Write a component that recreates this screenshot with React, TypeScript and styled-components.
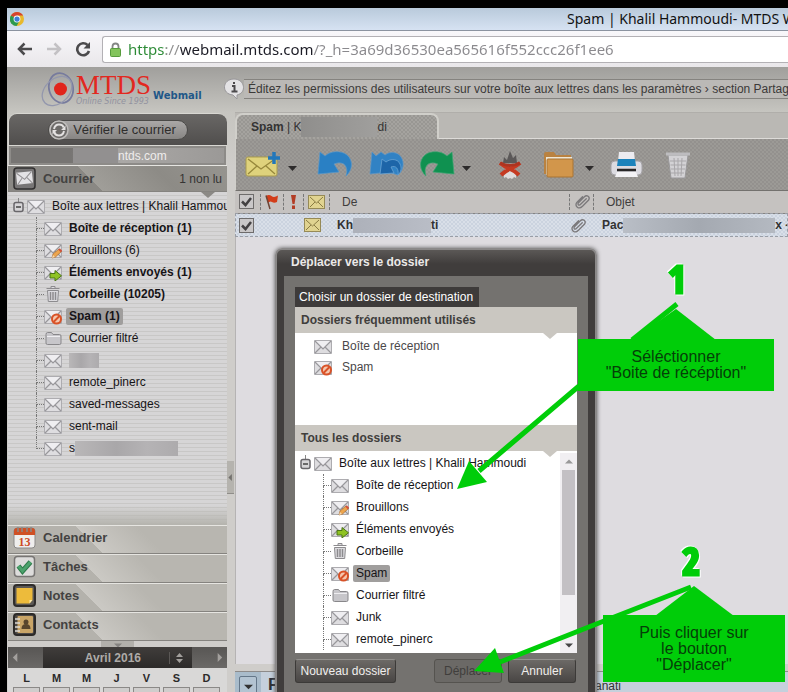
import React from "react";
import styled, { createGlobalStyle, css } from "styled-components";

const Global = createGlobalStyle`
  * { box-sizing: border-box; }
  body { margin: 0; background: #000; font-family: "Liberation Sans", Arial, sans-serif; font-size: 12px; color: #222; }
  button, input { font: inherit; color: inherit; }
  button { border: 0; padding: 0; background: none; cursor: pointer; }
  a { color: inherit; text-decoration: none; }
  ul { list-style: none; margin: 0; padding: 0; }
  svg { display: block; flex: none; }
`;

/* ---------- browser window ---------- */

const Screen = styled.div`
  position: relative;
  display: flex;
  flex-direction: column;
  height: 100vh;
  padding: 8px 0 0 7px;
  overflow: hidden;
`;

const TitleBar = styled.header`
  display: flex;
  align-items: center;
  justify-content: space-between;
  flex: none;
  height: 23px;
  padding-left: 3px;
  background: linear-gradient(#b9cadb, #d6e2f2);
  border-bottom: 1px solid #8b93a0;
  overflow: hidden;
`;

const WindowTitle = styled.div`
  width: 221px;
  font: 14px/20px "Noto Sans", "Open Sans", sans-serif;
  color: #111;
  white-space: nowrap;
  overflow: hidden;
`;

const NavBar = styled.nav`
  display: flex;
  align-items: center;
  flex: none;
  height: 36px;
  padding-left: 8px;
  background: linear-gradient(#f8f7fa, #e9e7ea);
`;

const NavButton = styled.button`
  display: grid;
  place-items: center;
  width: 20px;
  height: 24px;
  margin-right: 9px;
`;

const Address = styled.label`
  display: flex;
  align-items: center;
  gap: 7px;
  flex: 1;
  height: 27px;
  padding-left: 7px;
  background: #fff;
  border: 1px solid #b3b1b5;
  border-right: 0;
  border-radius: 3px 0 0 3px;
`;

const AddressInput = styled.input`
  flex: 1;
  min-width: 0;
  height: 24px;
  padding: 0;
  border: 0;
  outline: 0;
  font: 15px/24px "Noto Sans", "Open Sans", sans-serif;
  background: linear-gradient(90deg, #2b8a35 0 38px, #8d8d8d 38px 52px, #1c1c26 52px 185px, #8a898d 185px);
  -webkit-background-clip: text;
  background-clip: text;
  -webkit-text-fill-color: transparent;
`;

/* ---------- webmail shell ---------- */

const Webmail = styled.div`
  display: flex;
  flex-direction: column;
  flex: 1;
  min-height: 0;
  padding-left: 1px;
  background: linear-gradient(#a09f9c 0, #c6c5c0 45px, #cfcdca 100px);
`;

const Banner = styled.div`
  display: flex;
  flex: none;
  height: 45px;
`;

const Logo = styled.div`
  display: flex;
  align-items: center;
  width: 216px;
  padding-left: 33px;
`;

const LogoWords = styled.div`
  display: flex;
  flex-direction: column;
  padding-top: 2px;
`;

const LogoName = styled.span`
  height: 23px;
  font: 27px/23px "Liberation Serif", serif;
  color: #e2281f;
`;

const LogoTagline = styled.span`
  font: italic 8px/10px "DejaVu Sans", sans-serif;
  color: #92929f;
`;

const LogoProduct = styled.span`
  margin-left: 2px;
  padding-top: 12px;
  font: bold 10px/12px "DejaVu Sans", sans-serif;
  color: #1f5788;
`;

const Tip = styled.div`
  display: flex;
  align-items: center;
  flex: 1;
  min-width: 0;
  padding-bottom: 2px;
`;

const TipText = styled.div`
  flex: 1;
  height: 20px;
  padding-left: 4px;
  border: solid #85837f;
  border-width: 1px 0;
  background: #bbb9b6;
  font-size: 12px;
  line-height: 18px;
  color: #3c3a39;
  white-space: nowrap;
  overflow: hidden;
`;

const Columns = styled.div`
  display: flex;
  flex: 1;
  min-height: 0;
`;

const Sidebar = styled.aside`
  display: flex;
  flex-direction: column;
  width: 219px;
  flex: none;
  padding-top: 1px;
`;

const Gutter = styled.div`
  width: 8px;
  flex: none;
  display: flex;
  align-items: flex-start;
  padding-top: 349px;
`;

const Collapse = styled.button`
  display: grid;
  place-items: center;
  width: 7px;
  height: 33px;
  background: #b5b3ae;
  border-bottom: 1px solid #8f8d89;
`;

/* ---------- sidebar ---------- */

const CheckBar = styled.div`
  display: flex;
  justify-content: center;
  align-items: center;
  flex: none;
  height: 33px;
  background: linear-gradient(#696765, #504e4d);
  border: 1px solid #d8d7d2;
  border-width: 1px 0 1px 1px;
  border-radius: 9px 9px 0 0;
`;

const CheckMail = styled.button`
  display: flex;
  align-items: center;
  gap: 4px;
  height: 20px;
  padding-right: 11px;
  border: 1px solid #4b4a48;
  border-radius: 10px;
  background: linear-gradient(#aaa8a7, #878583);
  font-size: 13px;
  color: #2e2d2c;
`;

const Account = styled.div`
  display: flex;
  align-items: center;
  flex: none;
  height: 19px;
  margin: 0 1px;
  border: 2px solid #8d8b88;
  background: linear-gradient(90deg, #777573 0, #777573 60px, #aaa8a6 110px, #9b9997);
  color: #efedec;
  font-size: 12px;
  padding-left: 62px;
`;

const Blur = styled.span<{ $w: number; $tone?: string; $h?: number }>`
  display: inline-block;
  flex: none;
  width: ${(p) => p.$w}px;
  height: ${(p) => p.$h ?? 15}px;
  vertical-align: middle;
  background: ${(p) => p.$tone ?? "linear-gradient(90deg, #b9b7b8, #a9a7a9 40%, #b5b3b5 70%, #adabad)"};
`;

const SectionHead = styled.button<{ $active?: boolean }>`
  display: flex;
  align-items: center;
  flex: none;
  gap: 7px;
  height: ${(p) => (p.$active ? 27 : 29)}px;
  padding: ${(p) => (p.$active ? "0 5px" : "0 5px 4px")};
  border-top: 1px solid #e6e5e1;
  border-bottom: 1px solid #85837f;
  text-align: left;
  font-size: 13px;
  font-weight: bold;
  color: #434241;
  background: ${(p) =>
    p.$active
      ? "linear-gradient(45deg, #8a8884 0 67px, #a09e99 67px, #8d8b86 120px, #96948f)"
      : "linear-gradient(45deg, #b4b2ac 0 67px, #cbc9c4 67px, #b8b6b0 110px)"};
`;

const SectionName = styled.span`
  flex: 1;
`;

const Unread = styled.span`
  font-size: 12px;
  font-weight: normal;
  color: #353433;
`;

const FolderPane = styled.div`
  flex: 1;
  min-height: 0;
  overflow: hidden;
  padding: 3px 0 0 5px;
  background: linear-gradient(transparent calc(100% - 20px), #b5b4ae), repeating-linear-gradient(#d6d5d6 0 3px, #c8c7c6 3px 4px);
`;

const Notch = styled.svg.attrs({ viewBox: "0 0 14 6", width: 14, height: 6 })<{ $right: number; $tone: string }>`
  position: absolute;
  top: 0;
  right: ${(p) => p.$right}px;
  fill: ${(p) => p.$tone};
`;

const NotchHost = styled.div`
  position: relative;
  height: 0;
`;

const Splitter = styled.div`
  display: flex;
  justify-content: center;
  flex: none;
  height: 6px;
`;

const SplitterGrip = styled.div`
  display: grid;
  place-items: center;
  width: 33px;
  background: #b2b0ab;
`;

/* ---------- folder tree ---------- */

const Branch = styled.ul`
  margin-left: 23px;
`;

const Node = styled.li`
  display: flex;
  align-items: center;
  height: 22px;
`;

const Toggle = styled.button`
  display: grid;
  flex: none;
  width: 14px;
`;

const Elbow = styled.span<{ $last?: boolean }>`
  display: flex;
  flex-direction: column;
  width: 8px;
  height: 22px;
  &::before {
    content: "";
    height: 11px;
    border-left: 1px dotted #777;
    border-bottom: 1px dotted #777;
  }
  &::after {
    content: "";
    height: 11px;
    border-left: ${(p) => (p.$last ? "0" : "1px dotted #777")};
  }
`;

const FolderLink = styled.a<{ $bold?: boolean; $selected?: boolean }>`
  display: flex;
  align-items: center;
  height: 17px;
  margin-left: 4px;
  padding: 0 3px;
  border-radius: 2px;
  color: #161417;
  font-weight: ${(p) => (p.$bold ? "bold" : "normal")};
  white-space: nowrap;
  background: ${(p) => (p.$selected ? "#a09e9d" : "transparent")};
`;

/* ---------- calendar ---------- */

const Calendar = styled.section`
  flex: none;
  height: 45px;
  overflow: hidden;
  background: #d9d8d7;
`;

const MonthBar = styled.div`
  display: flex;
  height: 21px;
  background: #55534f;
`;

const MonthStep = styled.button`
  display: grid;
  place-items: center;
  width: 35px;
  background: linear-gradient(#585654, #6b6967);
  &:first-child { justify-content: start; padding-left: 3px; }
  &:last-child { justify-content: end; padding-right: 3px; }
`;

const MonthName = styled.button`
  display: flex;
  align-items: center;
  justify-content: flex-end;
  gap: 28px;
  flex: 1;
  padding-right: 9px;
  background: linear-gradient(#403d3b, #2c2a29);
  color: #aeaba8;
  font-size: 12px;
  font-weight: bold;
`;

const Month = styled.table`
  width: calc(100% - 6px);
  margin-left: 2px;
  table-layout: fixed;
  border-collapse: separate;
  border-spacing: 3px 1px;
  font-size: 12px;
  text-align: center;
  th { height: 17px; padding: 0; color: #2b2a2a; font-size: 11px; }
  td { height: 20px; padding: 0; border: 1px solid #8b8987; color: #777; background: #cfcdcc; }
`;

/* ---------- mail list ---------- */

const Main = styled.main`
  display: flex;
  flex-direction: column;
  flex: 1;
  min-width: 0;
`;

const dots = css`
  background-image: radial-gradient(circle at 1px 1px, #86848266 1px, transparent 1px), radial-gradient(circle at 3px 3px, #86848266 1px, transparent 1px);
  background-size: 4px 4px;
`;

const TabRow = styled.div`
  display: flex;
  flex: none;
  height: 27px;
  background: #bab8b4;
  border-top: 1px solid #b0aeaa;
`;

const Tab = styled.button`
  display: flex;
  align-items: center;
  width: 204px;
  padding-left: 14px;
  border: 2px solid #d0cfca;
  border-bottom: 0;
  border-radius: 8px 8px 0 0;
  background-color: #a5a39f;
  ${dots}
  font-size: 12px;
  color: #333;
  white-space: nowrap;
`;

const TabRest = styled.div`
  flex: 1;
  border-bottom: 1px solid #dddbd8;
`;

const Toolbar = styled.div`
  display: flex;
  align-items: center;
  flex: none;
  height: 52px;
  padding-left: 9px;
  border-left: 1px solid #d0cfca;
  border-bottom: 1px solid #73716e;
  background-color: #9c9a96;
  ${dots}
`;

const Tool = styled.button<{ $space?: number }>`
  display: grid;
  place-items: center;
  margin-right: ${(p) => p.$space ?? 0}px;
`;

const MailTable = styled.table`
  width: 100%;
  flex: none;
  table-layout: fixed;
  border-collapse: collapse;
  white-space: nowrap;
  th, td { padding: 0; overflow: hidden; text-align: left; }
  thead tr { height: 22px; background: #c5c2c0; }
  th { font-weight: normal; color: #3f3d3c; }
  tbody tr { height: 24px; background: repeating-conic-gradient(#cbd3df 0 25%, #d9dfe8 0 50%) 0 0 / 4px 4px; outline: 1px dashed #9a9ea6; outline-offset: -1px; }
  thead { border-bottom: 1px solid #858381; }
`;

const HeadCell = styled.div<{ $rule?: boolean; $pad?: number }>`
  display: flex;
  align-items: center;
  height: 16px;
  padding-left: ${(p) => p.$pad ?? 4}px;
  border-right: ${(p) => (p.$rule ? "1px dashed #777" : "0")};
`;

const BodyCell = styled.div<{ $pad?: number }>`
  display: flex;
  align-items: center;
  padding-left: ${(p) => p.$pad ?? 4}px;
  color: #333;
  font-weight: bold;
`;

const Tick = styled.label`
  display: grid;
  width: 15px;
  height: 15px;
  > * { grid-area: 1 / 1; }
`;

const TickInput = styled.input`
  appearance: none;
  margin: 0;
  width: 15px;
  height: 15px;
  border: 1px solid #6e6c6c;
  background: #c9c7c8;
`;

const MailBody = styled.div`
  flex: 1;
  background: #dedce0;
  border-left: 1px solid #b5b3b3;
`;

const Preview = styled.div`
  display: flex;
  flex: none;
  height: 21px;
  margin-top: 7px;
  padding: 4px 0 0 4px;
  border-top: 1px solid #8d8b8a;
  background: linear-gradient(90deg, #a9bccb 0 26px, #c5d0dc 26px);
  overflow: hidden;
`;

const PreviewMenu = styled.button`
  display: grid;
  place-items: center;
  width: 18px;
  height: 20px;
  border: 1px solid #647789;
  border-radius: 2px;
  background: #b3c4d2;
`;

const PreviewTitle = styled.span`
  width: 330px;
  padding-left: 11px;
  font-size: 17px;
  line-height: 18px;
  font-weight: bold;
  color: #2d3038;
`;

const PreviewSender = styled.span`
  padding-top: 3px;
  color: #333;
`;

/* ---------- dialog ---------- */

const Dialog = styled.section`
  position: absolute;
  left: 275px;
  top: 248px;
  width: 322px;
  padding: 0 7px 12px;
  border: 2px solid #8b8989;
  border-radius: 7px 7px 0 0;
  background: linear-gradient(#5b5856, #403d3c 14px);
  box-shadow: 0 0 4px #555;
`;

const DialogTitle = styled.h2`
  margin: 0;
  padding-left: 7px;
  font-size: 12px;
  line-height: 24px;
  height: 26px;
  color: #ece9e8;
`;

const DialogBody = styled.div`
  padding: 11px;
  background: #74726f;
`;

const DialogTab = styled.h3`
  width: fit-content;
  margin: 0;
  padding: 0 6px 0 4px;
  font-size: 12px;
  font-weight: normal;
  line-height: 20px;
  color: #fff;
  background: #3e3b3a;
`;

const GroupTitle = styled.h4`
  margin: 0;
  padding-left: 6px;
  font-size: 12px;
  line-height: 26px;
  color: #403e3c;
  background: #cac7c1;
`;

const Frequent = styled.div`
  height: 92px;
  padding: 2px 0 0 19px;
  background: #fff;
  li { height: 21px; }
  a { margin-left: 7px; color: #4b484a; }
`;

const AllFolders = styled.div`
  display: flex;
  height: 202px;
  padding-left: 5px;
  background: #fff;
  overflow: hidden;
`;

const AllTree = styled.div`
  flex: 1;
  padding-top: 1px;
`;

const ScrollTrack = styled.div`
  display: flex;
  flex-direction: column;
  align-items: center;
  width: 17px;
  margin-top: 2px;
  background: #f1eff2;
`;

const ScrollStep = styled.button`
  display: grid;
  place-items: center;
  width: 17px;
  height: 17px;
`;

const ScrollRest = styled.div`
  flex: 1;
`;

const ScrollThumb = styled.div`
  width: 13px;
  height: 125px;
  background: #c3c0c4;
`;

const Actions = styled.div`
  display: flex;
  gap: 6px;
  padding: 6px 1px 0 0;
`;

const ActionButton = styled.button<{ $width: number }>`
  width: ${(p) => p.$width}px;
  height: 24px;
  border: 1px solid #3c3a38;
  border-top-color: #93918e;
  border-radius: 3px;
  background: linear-gradient(#6c6966, #494644);
  font-size: 12px;
  color: #f0eeed;
  white-space: nowrap;
  &:first-child { margin-right: auto; }
  &:disabled { color: #403e3c; background: #6b6966; border-color: #55534f; }
`;

/* ---------- tutorial call-outs ---------- */

const Arrows = styled.svg`
  position: absolute;
  left: 0;
  top: 0;
  pointer-events: none;
`;

const Callout = styled.div<{ $x: number; $y: number; $w: number; $h: number }>`
  position: absolute;
  display: grid;
  place-items: center;
  left: ${(p) => p.$x}px;
  top: ${(p) => p.$y}px;
  width: ${(p) => p.$w}px;
  height: ${(p) => p.$h}px;
  background: #00cd09;
  font-size: 16px;
  line-height: 16px;
  text-align: center;
  color: #053f08;
`;

const StepNumber = styled.div<{ $x: number; $y: number }>`
  position: absolute;
  left: ${(p) => p.$x}px;
  top: ${(p) => p.$y}px;
  width: 30px;
  text-align: center;
  font: bold 38px/40px "Liberation Sans Narrow", "Open Sans Condensed", "DejaVu Sans Condensed", sans-serif;
  color: #00cd09;
  -webkit-text-stroke: 3px #00cd09;
  filter: drop-shadow(1px 1px 0 #fff) drop-shadow(-1px -1px 0 #fff);
`;

/* ---------- icons ---------- */

type Kind = "mail" | "draft" | "sent" | "trash" | "spam" | "folder";

function FolderIcon({ kind }: { kind: Kind }) {
  if (kind === "trash")
    return (
      <svg width="18" height="18" viewBox="0 0 18 18" fill="none" stroke="#8c8b8e" strokeWidth="1">
        <path d="M2.5 3.500h13M7 3V1.500h4V3M3.500 5.500l.8 11h9.400l.8-11z" fill="#dddce0" />
        <path d="M6.500 7v8M9 7v8M11.500 7v8" strokeWidth="1.500" />
      </svg>
    );
  if (kind === "folder")
    return (
      <svg width="18" height="18" viewBox="0 0 18 18">
        <path d="M2 5.500q0-2 1.500-2h4l1.500 2h6.500q1.500 0 1.500 1.500v7q0 1.500-1.500 1.500h-12Q2 15.500 2 14z" fill="#c7c6ca" stroke="#88878a" />
        <path d="M3 7.500h13" stroke="#eeedf0" />
      </svg>
    );
  return (
    <svg width="18" height="18" viewBox="0 0 18 18">
      <path d="M.5 3.500h17v13H.5z" fill="#dedde0" stroke="#adacb0" />
      <path d="M1 4l8 8 8-8z" fill="#efeef1" />
      <path d="M1 4l8 8 8-8M1 16l6-6M17 16l-6-6" fill="none" stroke="#98979b" strokeWidth="1.200" />
      {kind === "draft" && (
        <>
          <path d="M8 17l1-4 6-5 2.500 2.500-6 5.500z" fill="#eda54d" stroke="#a56831" strokeWidth=".7" />
          <path d="M15 8l2.500 2.500" stroke="#d0513c" strokeWidth="2" />
          <path d="M8 17l1-3 2 2z" fill="#f5dab1" />
        </>
      )}
      {kind === "sent" && <path d="M6 10.500h5v-3l6.500 5.300L11 18v-3H6z" fill="#8fc323" stroke="#4b7517" />}
      {kind === "spam" && (
        <>
          <circle cx="12.500" cy="12" r="4.500" fill="#f5c7af" stroke="#d95227" strokeWidth="2" />
          <path d="M9.500 15l6-6" stroke="#d95227" strokeWidth="2" />
        </>
      )}
    </svg>
  );
}

const Minus = () => (
  <svg width="11" height="16" viewBox="0 0 11 16">
    <path d="M5.500 0v4" stroke="#888" />
    <rect x="1" y="4.500" width="9" height="9" rx="2" fill="#d7d6d8" stroke="#68666a" strokeWidth="1.500" />
    <path d="M3 9h5" stroke="#444" strokeWidth="1.500" />
  </svg>
);

const Triangle = ({ dir, color = "#333", size = 9 }: { dir: "up" | "down" | "left" | "right"; color?: string; size?: number }) => {
  const d = { up: "M0 7l5-5 5 5z", down: "M0 3h10l-5 5z", left: "M7 0v10L2 5z", right: "M3 0l5 5-5 5z" }[dir];
  return (
    <svg width={size} height={size} viewBox="0 0 10 10">
      <path d={d} fill={color} />
    </svg>
  );
};

const YellowMail = () => (
  <svg width="17" height="14" viewBox="0 0 17 14">
    <rect x=".5" y=".5" width="16" height="13" fill="#e0d390" stroke="#968a57" />
    <path d="M2 2l6.500 6L15 2M2 12l5-5M15 12l-5-5" fill="none" stroke="#8a7c44" />
  </svg>
);

const Flag = () => (
  <svg width="14" height="16" viewBox="0 0 14 16">
    <path d="M1 2q3-2 5.500 0t6.500-.5L12 8q-3 1.500-5 0T3 9z" fill="#d33d19" />
    <path d="M1 1.500L5 15" stroke="#6d4435" strokeWidth="1.500" />
  </svg>
);

const Clip = () => (
  <svg width="17" height="17" viewBox="0 0 18 18" fill="none" stroke="#7b797b" strokeWidth="1.400" strokeLinecap="round">
    <path d="M13 6L7 12q-1.500 1.500-2.500.5T5 10l6-6q2-2 4-.5t.5 4L9 14q-3 3-5.500 1T3 10l6-6" />
  </svg>
);

const CheckMark = () => (
  <svg width="15" height="15" viewBox="0 0 15 15">
    <path d="M3 7.500l3.500 3.500L12 4" fill="none" stroke="#434143" strokeWidth="2.500" />
  </svg>
);

const arrowPath = "M3 1L8 5C13 0 24-1 30 4C37 10 35 20 29 25C32 16 27 9 17 13L22 21L1 23Z";

const Undo = () => (
  <svg width="36" height="28" viewBox="0 0 36 28">
    <path d={arrowPath} fill="#2a80c4" stroke="#5598cd" strokeWidth=".7" />
  </svg>
);

const UndoAll = () => (
  <svg width="36" height="28" viewBox="0 0 36 28">
    <path d="M3 1L7 5L12 1L16 4C21 0 29 1 32 6C36 12 34 20 29 24L20 21L1 23Z" fill="#3182c4" stroke="#5b97c9" strokeWidth=".7" />
    <path d="M13 8L17 11C22 7 29 8 31 13C33 17 32 21 29 24C30 18 27 14 22 16L25 22L11 23Z" fill="#1d65a8" stroke="#6aa3d3" strokeWidth=".8" />
  </svg>
);

const Redo = () => (
  <svg width="36" height="28" viewBox="0 0 36 28">
    <g transform="translate(36 0) scale(-1 1)">
      <path d={arrowPath} fill="#0f9150" stroke="#3ba671" strokeWidth=".7" />
    </g>
  </svg>
);

const NewMail = () => (
  <svg width="36" height="28" viewBox="0 0 36 28">
    <rect x="1" y="6" width="31" height="19" rx="2" fill="#dfd27c" stroke="#a99b4f" />
    <path d="M3 8l13 10L30 8M3 23l9-8M30 23l-9-8" fill="none" stroke="#97883c" strokeWidth="1.300" />
    <path d="M29 1v12M23 7h12" stroke="#2277bb" strokeWidth="3.500" />
  </svg>
);

const Burn = () => (
  <svg width="30" height="32" viewBox="0 0 30 32">
    <path d="M8 14l1-6 3 3 3-9 3 7 3-3 1 8z" fill="#5b5858" />
    <path d="M15 15q7 5 6 14l-2-1-2 2-2-1-2 1-2-2-2 1q-1-9 6-14z" fill="#dedbdb" />
    <path d="M5 14q5 4 10 6t9 6M25 14q-5 4-10 6t-9 6" fill="none" stroke="#c53a22" strokeWidth="4" />
    <path d="M5 14q10 5 20 0" fill="none" stroke="#ad3421" strokeWidth="3" />
  </svg>
);

const BigFolder = () => (
  <svg width="32" height="28" viewBox="0 0 32 28">
    <path d="M1 3q0-2 2-2h8l2 3h15v19H1z" fill="#b98241" />
    <path d="M3 6h26v18H3z" fill="#efe7d6" />
    <rect x="4" y="8" width="26" height="18" rx="1" fill="#d2964b" stroke="#a97535" />
  </svg>
);

const Printer = () => (
  <svg width="34" height="28" viewBox="0 0 34 28">
    <path d="M10 1h15l1 9H9z" fill="#ecebf0" />
    <rect x="2" y="10" width="31" height="14" rx="4" fill="#dcdbe1" stroke="#a5a3a7" />
    <path d="M9 8h17l1 7H8z" fill="#1b82bb" />
    <path d="M8 19h19" stroke="#282627" strokeWidth="2.500" />
    <path d="M8 21h19l2 5H6z" fill="#f3f2f5" />
  </svg>
);

const BigTrash = () => (
  <svg width="26" height="28" viewBox="0 0 26 28">
    <path d="M3 4h20l-3 23H6z" fill="#d3d2d5" stroke="#9a999b" />
    <path d="M1 3h24" stroke="#bdbcbf" strokeWidth="3" />
    <path d="M5 10h16M5.500 14h15M6 18h14M6 22h13M9 7l1 18M13 7v18M17 7l-1 18" stroke="#a9a7aa" />
  </svg>
);

const SectionIcon = ({ kind }: { kind: "mail" | "calendar" | "tasks" | "notes" | "contacts" }) => (
  <svg width="23" height="23" viewBox="0 0 23 23">
    {kind === "mail" && (
      <>
        <rect x="1" y="1" width="21" height="21" rx="3" fill="#777575" stroke="#312f2f" strokeWidth="1.500" />
        <g transform="rotate(-6 11 11)">
          <rect x="3.500" y="5" width="16" height="12" fill="#e4e3e5" />
          <path d="M4 5.500l7.500 7L19 5.500M4 17l5-6M19 17l-5-6" fill="none" stroke="#929092" />
        </g>
      </>
    )}
    {kind === "calendar" && (
      <>
        <rect x="1" y="2" width="21" height="20" rx="3" fill="#efeeed" stroke="#8c8a88" />
        <path d="M1 9V5q0-3 3-3h15q3 0 3 3v4z" fill="#cf5025" />
        <path d="M5 1v5M9 1v5M14 1v5M18 1v5" stroke="#8d8987" strokeWidth="1.500" />
        <text x="11.500" y="19.500" textAnchor="middle" fontFamily="Liberation Serif" fontWeight="bold" fontSize="12" fill="#cd4c24">
          13
        </text>
      </>
    )}
    {kind === "tasks" && (
      <>
        <rect x="1.500" y="1.500" width="20" height="20" rx="3" fill="#dddcdb" stroke="#777573" strokeWidth="1.500" />
        <path d="M5.500 11l4 5 8-9" fill="none" stroke="#2e7b4a" strokeWidth="5" />
        <path d="M5.500 11l4 5 8-9" fill="none" stroke="#4ba26c" strokeWidth="3" />
      </>
    )}
    {kind === "notes" && (
      <>
        <rect x="1" y="1" width="21" height="21" rx="3" fill="#5c5955" stroke="#2f2d2b" strokeWidth="2" />
        <path d="M3.500 4h16v12l-3 3.500h-13z" fill="#edbb3b" />
        <path d="M19.500 16h-3v3.500z" fill="#faeab0" />
      </>
    )}
    {kind === "contacts" && (
      <>
        <rect x="1" y="1" width="21" height="21" rx="3" fill="#4f4b47" stroke="#2c2a28" strokeWidth="2" />
        <rect x="4.500" y="3" width="15.500" height="17" rx="1" fill="#c9a567" />
        <circle cx="13" cy="9" r="2.500" fill="#58452c" />
        <path d="M8.500 16q0-5 4.500-5t4.500 5z" fill="#58452c" />
        <path d="M2 6h5M2 10h5M2 14h5M2 18h5" stroke="#dedbd6" strokeWidth="1.500" />
      </>
    )}
  </svg>
);

const Chrome = () => (
  <svg width="14" height="14" viewBox="0 0 16 16">
    <circle cx="8" cy="8" r="8" fill="#e8b92c" />
    <path d="M8 8L1 4Q3.500 0 8 0t7 4H8z" fill="#d5432f" />
    <path d="M8 8l-7-4q-2.500 5 .5 9Q4 16 7.500 16L11 10z" fill="#2c9950" />
    <circle cx="8" cy="8" r="3.900" fill="#fff" />
    <circle cx="8" cy="8" r="3" fill="#3d7fd6" />
  </svg>
);

const BackArrow = ({ color, flip }: { color: string; flip?: boolean }) => (
  <svg width="16" height="14" viewBox="0 0 16 14">
    <path d={flip ? "M1 7h12M8.500 1.500L14 7l-5.500 5.500" : "M15 7H3M7.500 1.500L2 7l5.500 5.500"} fill="none" stroke={color} strokeWidth="2.500" />
  </svg>
);

const Reload = () => (
  <svg width="16" height="16" viewBox="0 0 16 16">
    <path d="M12.500 4A6 6 0 1 0 14 10" fill="none" stroke="#4b4a4c" strokeWidth="2.600" />
    <path d="M15 1v6.500H8.500z" fill="#4b4a4c" />
  </svg>
);

const Lock = () => (
  <svg width="11" height="15" viewBox="0 0 11 15">
    <path d="M2.500 7V4.500q0-3 3-3t3 3V7" fill="none" stroke="#838684" strokeWidth="1.800" />
    <rect x=".5" y="6.500" width="10" height="8" rx="1" fill="#83c45c" stroke="#579b3d" />
  </svg>
);

const Sync = () => (
  <svg width="20" height="20" viewBox="0 0 20 20">
    <circle cx="10" cy="10" r="9" fill="#6d6b69" stroke="#bfbdbb" strokeWidth="1.500" />
    <path d="M5 9q1-4.500 5-4.500t4.500 3M15 11q-1 4.500-5 4.500T5.500 12" fill="none" stroke="#e4e2e1" strokeWidth="2" />
    <path d="M16.500 5.500V10H12zM3.500 14.500V10H8z" fill="#e4e2e1" />
  </svg>
);

const InfoBubble = () => (
  <svg width="20" height="22" viewBox="0 0 20 22">
    <path d="M10 1C21 1 23 15 13 17v4l-4-4C-3 16-2 1 10 1z" fill="#e3e2e4" stroke="#99979a" />
    <path d="M8 8h2.500v5M7.500 13.500h6M10 4v2" fill="none" stroke="#4c4a4c" strokeWidth="2" />
  </svg>
);

const LogoMark = () => (
  <svg width="35" height="36" viewBox="0 0 35 36" fill="none">
    <ellipse cx="20" cy="16" rx="12" ry="15" stroke="#777b9d" strokeWidth="1.800" transform="rotate(-14 20 16)" />
    <ellipse cx="16" cy="19" rx="17" ry="12" stroke="#9397ad" strokeWidth="1.300" transform="rotate(-44 16 19)" />
    <circle cx="19.500" cy="17" r="6.500" fill="#e1251c" />
  </svg>
);

function Caret({ wide }: { wide?: boolean }) {
  return (
    <svg width={wide ? 28 : 22} height="20" viewBox={wide ? "-3 0 28 20" : "0 0 22 20"}>
      <path d="M7 11h9l-4.500 5z" fill="#2d2b2b" />
    </svg>
  );
}

/* ---------- composition ---------- */

type Folder = { name: string; kind: Kind; bold?: boolean; selected?: boolean; hidden?: number };

const mailbox: Folder[] = [
  { name: "Boîte de réception (1)", kind: "mail", bold: true },
  { name: "Brouillons (6)", kind: "draft" },
  { name: "Éléments envoyés (1)", kind: "sent", bold: true },
  { name: "Corbeille (10205)", kind: "trash", bold: true },
  { name: "Spam (1)", kind: "spam", bold: true, selected: true },
  { name: "Courrier filtré", kind: "folder" },
  { name: "", kind: "mail", hidden: 30 },
  { name: "remote_pinerc", kind: "mail" },
  { name: "saved-messages", kind: "mail" },
  { name: "sent-mail", kind: "mail" },
  { name: "s", kind: "mail", hidden: 103 },
];

const destinations: Folder[] = [
  { name: "Boîte de réception", kind: "mail" },
  { name: "Brouillons", kind: "draft" },
  { name: "Éléments envoyés", kind: "sent" },
  { name: "Corbeille", kind: "trash" },
  { name: "Spam", kind: "spam", selected: true },
  { name: "Courrier filtré", kind: "folder" },
  { name: "Junk", kind: "mail" },
  { name: "remote_pinerc", kind: "mail" },
];

function FolderTree({ folders, more }: { folders: Folder[]; more?: boolean }) {
  return (
    <ul>
      <Node>
        <Toggle aria-label="Réduire">
          <Minus />
        </Toggle>
        <FolderIcon kind="mail" />
        <FolderLink href="#root">Boîte aux lettres | Khalil Hammoudi</FolderLink>
      </Node>
      <li>
        <Branch>
          {folders.map((f, i) => (
            <Node key={i}>
              <Elbow $last={!more && i === folders.length - 1} />
              <FolderIcon kind={f.kind} />
              <FolderLink href="#folder" $bold={f.bold} $selected={f.selected}>
                {f.name}
                {f.hidden && <Blur $w={f.hidden} />}
              </FolderLink>
            </Node>
          ))}
        </Branch>
      </li>
    </ul>
  );
}

const Check = ({ label }: { label: string }) => (
  <Tick>
    <TickInput type="checkbox" defaultChecked aria-label={label} />
    <CheckMark />
  </Tick>
);

export default function App() {
  return (
    <Screen>
      <Global />
      <TitleBar>
        <Chrome />
        <WindowTitle>Spam | Khalil Hammoudi- MTDS Webmail</WindowTitle>
      </TitleBar>
      <NavBar>
        <NavButton aria-label="Précédent"><BackArrow color="#4b4a4c" /></NavButton>
        <NavButton aria-label="Suivant"><BackArrow color="#c3c1c4" flip /></NavButton>
        <NavButton aria-label="Actualiser"><Reload /></NavButton>
        <Address>
          <Lock />
          <AddressInput aria-label="Adresse" defaultValue="https://webmail.mtds.com/?_h=3a69d36530ea565616f552ccc26f1ee6" />
        </Address>
      </NavBar>

      <Webmail>
        <Banner>
          <Logo>
            <LogoMark />
            <LogoWords>
              <LogoName>MTDS</LogoName>
              <LogoTagline>Online Since 1993</LogoTagline>
            </LogoWords>
            <LogoProduct>Webmail</LogoProduct>
          </Logo>
          <Tip>
            <InfoBubble />
            <TipText>
              Éditez les permissions des utilisateurs sur votre boîte aux lettres dans les paramètres › section Partage
            </TipText>
          </Tip>
        </Banner>

        <Columns>
          <Sidebar>
            <CheckBar>
              <CheckMail><Sync />Vérifier le courrier</CheckMail>
            </CheckBar>
            <Account>
              <Blur $w={45} $tone="#929090" />
              ntds.com
            </Account>
            <SectionHead $active>
              <SectionIcon kind="mail" />
              <SectionName>Courrier</SectionName>
              <Unread>1 non lu</Unread>
            </SectionHead>
            <NotchHost><Notch $right={12} $tone="#8b8985"><path d="M0 0h14L7 6z" /></Notch></NotchHost>
            <FolderPane><FolderTree folders={mailbox} /></FolderPane>
            <SectionHead><SectionIcon kind="calendar" /><SectionName>Calendrier</SectionName></SectionHead>
            <SectionHead><SectionIcon kind="tasks" /><SectionName>Tâches</SectionName></SectionHead>
            <SectionHead><SectionIcon kind="notes" /><SectionName>Notes</SectionName></SectionHead>
            <SectionHead><SectionIcon kind="contacts" /><SectionName>Contacts</SectionName></SectionHead>
            <Splitter><SplitterGrip><Triangle dir="down" color="#858380" size={8} /></SplitterGrip></Splitter>
            <Calendar>
              <MonthBar>
                <MonthStep aria-label="Mois précédent"><Triangle dir="left" color="#a3a09d" /></MonthStep>
                <MonthName>
                  Avril 2016
                  <svg width="14" height="12" viewBox="0 0 14 12">
                    <path d="M.5 0v12" stroke="#5b5856" />
                    <path d="M7 5l3.500-4L14 5zM7 7l3.500 4L14 7z" fill="#a3a09d" />
                  </svg>
                </MonthName>
                <MonthStep aria-label="Mois suivant"><Triangle dir="right" color="#a3a09d" /></MonthStep>
              </MonthBar>
              <Month>
                <thead>
                  <tr>{["L", "M", "M", "J", "V", "S", "D"].map((d, i) => <th key={i}>{d}</th>)}</tr>
                </thead>
                <tbody>
                  <tr>{[28, 29, 30, 31, 1, 2, 3].map((d) => <td key={d}>{d}</td>)}</tr>
                </tbody>
              </Month>
            </Calendar>
          </Sidebar>
          <Gutter>
            <Collapse aria-label="Replier le panneau"><Triangle dir="left" color="#73716e" size={7} /></Collapse>
          </Gutter>

          <Main>
            <TabRow>
              <Tab>
                <b>Spam</b>&nbsp;|&nbsp;K<Blur $w={76} $h={20} $tone="linear-gradient(90deg, #8f8e8c, #a09f9d)" />di
              </Tab>
              <TabRest />
            </TabRow>
            <Toolbar>
              <Tool aria-label="Nouveau message"><NewMail /></Tool>
              <Tool aria-label="Options de message" $space={14}><Caret /></Tool>
              <Tool aria-label="Répondre" $space={16}><Undo /></Tool>
              <Tool aria-label="Répondre à tous" $space={14}><UndoAll /></Tool>
              <Tool aria-label="Transférer"><Redo /></Tool>
              <Tool aria-label="Options de transfert" $space={18}><Caret /></Tool>
              <Tool aria-label="Indésirable" $space={18}><Burn /></Tool>
              <Tool aria-label="Déplacer"><BigFolder /></Tool>
              <Tool aria-label="Options de déplacement" $space={6}><Caret wide /></Tool>
              <Tool aria-label="Imprimer" $space={22}><Printer /></Tool>
              <Tool aria-label="Supprimer"><BigTrash /></Tool>
            </Toolbar>
            <MailTable>
              <colgroup>
                <col width="26" /><col width="23" /><col width="20" /><col width="26" /><col width="240" /><col width="24" /><col />
              </colgroup>
              <thead>
                <tr>
                  <th><HeadCell $rule><Check label="Tout sélectionner" /></HeadCell></th>
                  <th><HeadCell $rule><Flag /></HeadCell></th>
                  <th>
                    <HeadCell $rule $pad={6}>
                      <svg width="7" height="14" viewBox="0 0 7 14"><path d="M1 0h5L4.500 9h-2zM2 10.500h3V14H2z" fill="#b33d25" /></svg>
                    </HeadCell>
                  </th>
                  <th><HeadCell $rule><YellowMail /></HeadCell></th>
                  <th><HeadCell $rule $pad={12}>De</HeadCell></th>
                  <th><HeadCell $rule><Clip /></HeadCell></th>
                  <th><HeadCell $pad={12}>Objet</HeadCell></th>
                </tr>
              </thead>
              <tbody>
                <tr>
                  <td><BodyCell><Check label="Sélectionner le message" /></BodyCell></td>
                  <td />
                  <td />
                  <td><BodyCell $pad={0}><YellowMail /></BodyCell></td>
                  <td><BodyCell $pad={7}>Kh<Blur $w={78} $tone="linear-gradient(90deg, #adb1ba, #b9bdc6)" />ti</BodyCell></td>
                  <td><BodyCell $pad={0}><Clip /></BodyCell></td>
                  <td><BodyCell $pad={8}>Pac<Blur $w={152} $tone="linear-gradient(90deg, #b9bec6, #a4a9b1 50%, #b4b9c1)" />x - lien</BodyCell></td>
                </tr>
              </tbody>
            </MailTable>
            <MailBody />
            <Preview>
              <PreviewMenu aria-label="Options"><Triangle dir="down" /></PreviewMenu>
              <PreviewTitle>F</PreviewTitle>
              <PreviewSender>Kanati</PreviewSender>
            </Preview>
          </Main>
        </Columns>
      </Webmail>

      <Dialog role="dialog" aria-label="Déplacer vers le dossier">
        <DialogTitle>Déplacer vers le dossier</DialogTitle>
        <DialogBody>
          <DialogTab>Choisir un dossier de destination</DialogTab>
          <GroupTitle>Dossiers fréquemment utilisés</GroupTitle>
          <NotchHost><Notch $right={20} $tone="#cac7c1"><path d="M0 0h14L7 6z" /></Notch></NotchHost>
          <Frequent>
            <ul>
              <Node><FolderIcon kind="mail" /><FolderLink href="#inbox">Boîte de réception</FolderLink></Node>
              <Node><FolderIcon kind="spam" /><FolderLink href="#spam">Spam</FolderLink></Node>
            </ul>
          </Frequent>
          <GroupTitle>Tous les dossiers</GroupTitle>
          <NotchHost><Notch $right={20} $tone="#cac7c1"><path d="M0 0h14L7 6z" /></Notch></NotchHost>
          <AllFolders>
            <AllTree><FolderTree folders={destinations} more /></AllTree>
            <ScrollTrack>
              <ScrollStep aria-label="Monter"><Triangle dir="up" color="#999" size={8} /></ScrollStep>
              <ScrollThumb />
              <ScrollRest />
              <ScrollStep aria-label="Descendre"><Triangle dir="down" color="#444" size={8} /></ScrollStep>
            </ScrollTrack>
          </AllFolders>
          <Actions>
            <ActionButton $width={101}>Nouveau dossier</ActionButton>
            <ActionButton $width={68} disabled>Déplacer</ActionButton>
            <ActionButton $width={68}>Annuler</ActionButton>
          </Actions>
        </DialogBody>
      </Dialog>

      <Callout $x={578} $y={339} $w={196} $h={52}>
        <span>Séléctionner<br />"Boite de récéption"</span>
      </Callout>
      <Callout $x={603} $y={615} $w={182} $h={67}>
        <span>Puis cliquer sur<br />le bouton<br />"Déplacer"</span>
      </Callout>
      <Arrows width="788" height="692" viewBox="0 0 788 692" fill="#00cd09" stroke="none">
        <path d="M632 340l44-31 40 31z" />
        <path d="M655 616l39-30 40 30z" />
        <path d="M677 304l-45 36M579 386l-100 85M691 587l-87 34L495 664" stroke="#00cd09" strokeWidth="5" />
        <path d="M457 489l12-28 18 21z" />
        <path d="M474 671l21-23 9 25z" />
      </Arrows>
      <StepNumber $x={662} $y={258}>1</StepNumber>
      <StepNumber $x={676} $y={540}>2</StepNumber>
    </Screen>
  );
}
